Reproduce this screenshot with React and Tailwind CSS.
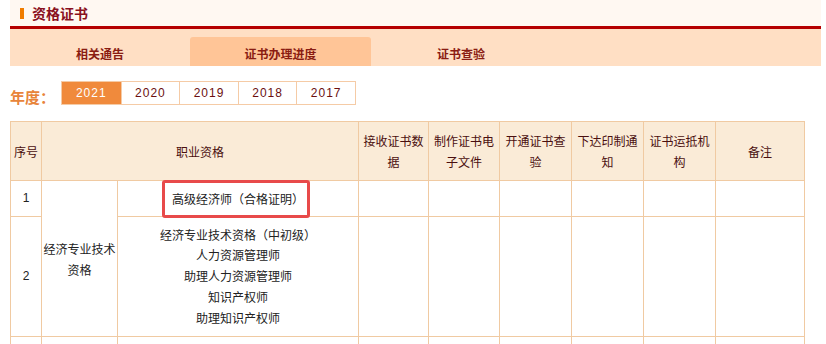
const years = ['2021', '2020', '2019', '2018', '2017'];
const heads = ['接收证书数据', '制作证书电子文件', '开通证书查验', '下达印制通知', '证书运抵机构'];
const titles = ['经济专业技术资格（中初级）', '人力资源管理师', '助理人力资源管理师', '知识产权师', '助理知识产权师'];

const cell = 'border border-[#f0caa2] p-0';
const emptyCols = [0, 1, 2, 3, 4, 5];

export default function App() {
  return (
    <div className="w-[826px] h-[344px] overflow-hidden bg-white text-[12px] text-[#222]" style={{ fontFamily: '"Noto Sans CJK SC", "Liberation Sans", sans-serif' }}>
      <div className="ml-[10px] mr-[5px]">
        <div className="flex h-[26px] items-center bg-[#fff8f2] pl-[10px]">
          <span className="mr-[8px] h-[11px] w-[4px] bg-[#f07c00]" />
          <span className="text-[14px] font-bold leading-none text-[#8a1020]">资格证书</span>
        </div>
        <div className="h-[3px] bg-[#b50000]" />
        <div className="flex h-[37px] items-end bg-[#ffdfc4]">
          {['相关通告', '证书办理进度', '证书查验'].map((t, i) => (
            <div key={t} className={`flex h-[29px] w-[180px] items-center justify-center pt-[4px] text-[12px] font-bold text-[#8a1c12] ${i === 1 ? 'rounded-t-[3px] bg-[#ffc597] w-[181px]' : ''}`}>
              {t}
            </div>
          ))}
        </div>
      </div>

      <div className="ml-[10px] mt-[15px] flex h-[24px] items-center">
        <span className="w-[51px] pt-[6px] text-[15px] font-bold leading-none text-[#e8843a]">年度：</span>
        <div className="flex h-[24px] border border-[#f5cba6]">
          {years.map((y, i) => (
            <div key={y} className={`flex w-[58.6px] items-center justify-center text-[12px] tracking-[1px] ${i > 0 ? 'border-l border-[#f5cba6]' : ''} ${i === 0 ? 'bg-[#f08a3c] text-white' : 'text-[#6b0f0f]'}`} style={{ fontFamily: '"Liberation Sans", sans-serif' }}>
              {y}
            </div>
          ))}
        </div>
      </div>

      <table className="ml-[10px] mt-[16px] w-[794px] table-fixed border-collapse text-center leading-[21px]">
        <colgroup>
          <col className="w-[31px]" />
          <col className="w-[76px]" />
          <col className="w-[241px]" />
          <col className="w-[70px]" />
          <col className="w-[71px]" />
          <col className="w-[72px]" />
          <col className="w-[72px]" />
          <col className="w-[72px]" />
          <col className="w-[89px]" />
        </colgroup>
        <thead>
          <tr className="h-[59px] bg-[#faebd7] text-[#4a0f0f]">
            <th className={`${cell} font-normal`}>序号</th>
            <th className={`${cell} font-normal`} colSpan={2}>职业资格</th>
            {heads.map((h) => (
              <th key={h} className={`${cell} px-[4px] font-normal`}>{h}</th>
            ))}
            <th className={`${cell} font-normal`}>备注</th>
          </tr>
        </thead>
        <tbody>
          <tr className="h-[36px]">
            <td className={cell} style={{ fontFamily: '"Liberation Sans", sans-serif' }}>1</td>
            <td className={`${cell} px-[1px]`} rowSpan={2}>经济专业技术资格</td>
            <td className={`${cell} relative`}>
              <span className="absolute left-[44px] top-[-1px] h-[38px] w-[148px] rounded-[3px] border-[3px] border-[#e84a4a]" />
              <span className="relative">高级经济师（合格证明）</span>
            </td>
            {emptyCols.map((c) => <td key={c} className={cell} />)}
          </tr>
          <tr className="h-[120px]">
            <td className={cell} style={{ fontFamily: '"Liberation Sans", sans-serif' }}>2</td>
            <td className={`${cell} leading-[20.7px]`}>
              {titles.map((t) => <div key={t}>{t}</div>)}
            </td>
            {emptyCols.map((c) => <td key={c} className={cell} />)}
          </tr>
          <tr className="h-[40px]">
            <td className={cell} />
            <td className={cell} />
            <td className={cell} />
            {emptyCols.map((c) => <td key={c} className={cell} />)}
          </tr>
        </tbody>
      </table>
    </div>
  );
}
